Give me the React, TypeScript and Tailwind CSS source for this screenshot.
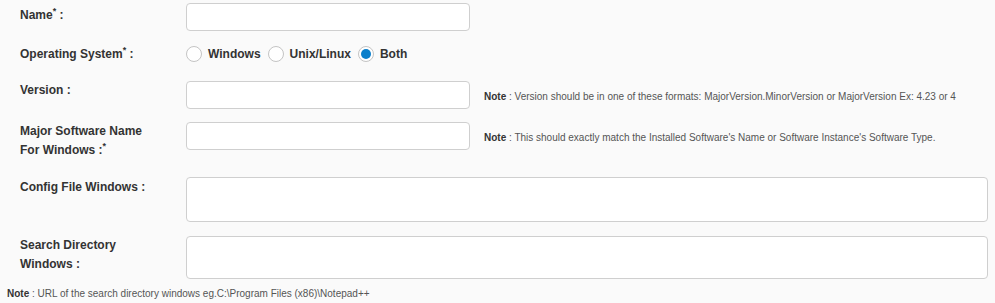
import React from "react";

const label = "w-[186px] shrink-0 pl-5 text-[12px] leading-[19px] font-bold text-[#333]";
const input = "h-[28px] w-[284px] rounded-[4px] border border-[#cfcfcf] bg-white";
const area = "block w-[802px] rounded-[4px] border border-[#cfcfcf] bg-white resize-none";

function Req() {
  return <span className="relative -top-[5px] text-[9px] leading-none">*</span>;
}

function Radio({ text, checked }: { text: string; checked?: boolean }) {
  return (
    <label className="flex items-center gap-[6px]">
      <span className="w-4 h-4 rounded-full border border-[#c4c4c4] bg-white flex items-center justify-center">
        {checked && <span className="w-[10px] h-[10px] rounded-full bg-[#0b7fcb]"></span>}
      </span>
      <span className="text-[12px] font-bold text-[#333]">{text}</span>
    </label>
  );
}

function Note({ children }: { children: React.ReactNode }) {
  return (
    <p className="text-[10px] leading-[14px] text-[#555]">
      <span className="font-bold text-[#333]">Note</span> : {children}
    </p>
  );
}

export default function App() {
  return (
    <div className="w-[995px] h-[303px] bg-[#fafafa] font-['Liberation_Sans',Arial,sans-serif] overflow-hidden">
      <div className="flex flex-col pt-[3px]">
        {/* Name */}
        <div className="flex items-start">
          <div className={`${label} pt-[3px]`}>
            Name<Req /> :
          </div>
          <input className={input} />
        </div>

        {/* OS */}
        <div className="flex items-center mt-[15px] h-4">
          <div className={label}>
            Operating System<Req /> :
          </div>
          <div className="flex items-center gap-[7px]">
            <Radio text="Windows" />
            <Radio text="Unix/Linux" />
            <Radio text="Both" checked />
          </div>
        </div>

        {/* Version */}
        <div className="flex items-start mt-[19px]">
          <div className={label}>Version :</div>
          <input className={`${input} h-[27px]`} />
          <div className="ml-[14px] pt-[9px]">
            <Note>Version should be in one of these formats: MajorVersion.MinorVersion or MajorVersion Ex: 4.23 or 4</Note>
          </div>
        </div>

        {/* Major software */}
        <div className="flex items-start mt-[13px]">
          <div className={label}>
            Major Software Name
            <br />
            For Windows :<Req />
          </div>
          <input className={`${input} h-[27px]`} />
          <div className="ml-[14px] pt-[9px]">
            <Note>This should exactly match the Installed Software's Name or Software Instance's Software Type.</Note>
          </div>
        </div>

        {/* Config file */}
        <div className="flex items-start mt-[17px]">
          <div className={`${label} pt-[1px]`}>Config File Windows :</div>
          <textarea className={`${area} h-[45px]`} />
        </div>

        {/* Search dir */}
        <div className="flex items-start mt-[14px]">
          <div className={label}>
            Search Directory
            <br />
            Windows :
          </div>
          <textarea className={`${area} h-[43px]`} />
        </div>

        <div className="pl-[7px] mt-[8px]">
          <Note>URL of the search directory windows eg.C:\Program Files (x86)\Notepad++</Note>
        </div>
      </div>
    </div>
  );
}
